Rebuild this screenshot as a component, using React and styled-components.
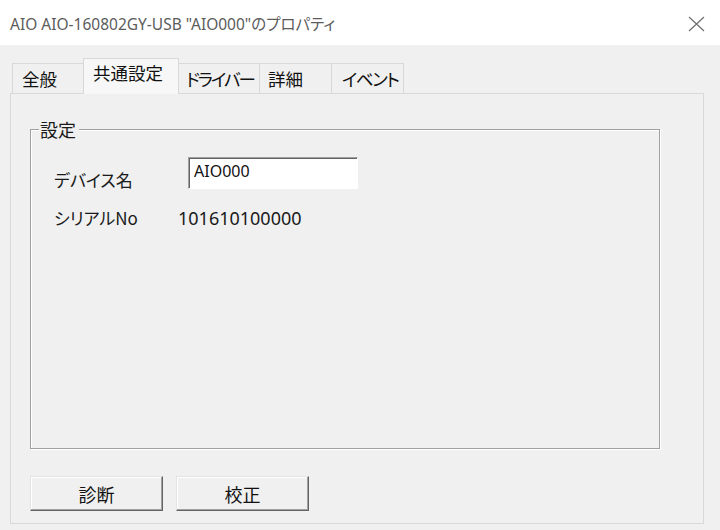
import styled, { createGlobalStyle } from "styled-components";

const GlobalStyle = createGlobalStyle`
  html, body {
    margin: 0;
    padding: 0;
    background: #ffffff;
  }
  body {
    font-family: "Noto Sans CJK JP", "Noto Sans", sans-serif;
    font-feature-settings: "palt";
    color: #1a1a1a;
  }
`;

const Window = styled.div`
  width: 720px;
  height: 530px;
  display: flex;
  flex-direction: column;
  overflow: hidden;
`;

const TitleBar = styled.div`
  height: 45px;
  flex: none;
  display: flex;
  align-items: center;
  justify-content: space-between;
  padding: 2px 15px 0 10px;
  box-sizing: border-box;
  background: #ffffff;
`;

const Title = styled.span`
  font-family: "Noto Sans", "Noto Sans CJK JP", sans-serif;
  font-size: 15.5px;
  color: #5c5c5c;
`;

const Body = styled.div`
  flex: 1;
  display: flex;
  flex-direction: column;
  padding: 13px 16px 6px 10px;
  background: #f0f0f0;
  min-height: 0;
`;

const TabStrip = styled.div`
  display: flex;
  align-items: flex-end;
  height: 35px;
  padding-left: 2px;
`;

const Tab = styled.div`
  width: ${({ w }) => w}px;
  height: ${({ active }) => (active ? 36 : 30)}px;
  margin-bottom: ${({ active }) => (active ? -1 : 0)}px;
  box-sizing: border-box;
  display: flex;
  align-items: center;
  padding-left: ${({ pl }) => pl}px;
  padding-bottom: ${({ active }) => (active ? 8 : 0)}px;
  border: 1px solid #d9d9d9;
  border-bottom: none;
  margin-left: ${({ first }) => (first ? 0 : -1)}px;
  background: ${({ active }) => (active ? "#f7f7f7" : "#f0f0f0")};
  position: relative;
  z-index: ${({ active }) => (active ? 1 : 0)};
  font-size: 17.5px;
  letter-spacing: ${({ ls }) => ls || 0}px;
  white-space: nowrap;
  color: #111;
`;

const Panel = styled.div`
  flex: 1;
  display: flex;
  flex-direction: column;
  border: 1px solid #d9d9d9;
  background: #f0f0f0;
  padding: 35px 43px 12px 19px;
`;

const GroupBox = styled.div`
  flex: 1;
  position: relative;
  border: 1px solid #a0a0a0;
  box-shadow: 1px 1px 0 #ffffff, inset 1px 1px 0 #ffffff;
  padding: 27px 24px 0 23px;
`;

const Legend = styled.span`
  position: absolute;
  top: -12px;
  left: 8px;
  padding: 0 3px 0 1px;
  background: #f0f0f0;
  font-size: 18px;
  line-height: 22px;
`;

const FieldRow = styled.div`
  display: flex;
  align-items: ${({ top }) => (top ? "flex-start" : "center")};
  margin-top: ${({ mt }) => mt || 0}px;
`;

const Label = styled.span`
  width: ${({ w }) => w}px;
  flex: none;
  font-size: 17px;
  line-height: 22px;
  padding-top: ${({ pt }) => pt || 0}px;
`;

const Value = styled.span`
  font-family: "Noto Sans", sans-serif;
  font-size: 18px;
  line-height: 22px;
`;

const TextBox = styled.div`
  width: 170px;
  height: 32px;
  box-sizing: border-box;
  background: #ffffff;
  border: 1px solid;
  border-color: #a0a0a0 #ffffff #ffffff #a0a0a0;
  box-shadow: inset 1px 1px 0 #646464;
  padding: 2px 5px;
  font-family: "Noto Sans", sans-serif;
  font-size: 16px;
  line-height: 22px;
  color: #111;
`;

const ButtonRow = styled.div`
  display: flex;
  gap: 13px;
  margin-top: 27px;
`;

const Button = styled.button`
  width: 133px;
  height: 35px;
  box-sizing: border-box;
  background: #f0f0f0;
  border: 1px solid;
  border-color: #e3e3e3 #646464 #646464 #e3e3e3;
  box-shadow: inset -1px -1px 0 #a0a0a0, inset 1px 1px 0 #ffffff;
  font-family: "Noto Sans CJK JP", sans-serif;
  font-size: 18px;
  color: #111;
  padding: 0;
`;

const CloseIcon = () => (
  <svg width="17" height="16" viewBox="0 0 17 16">
    <path d="M1 1 L16 15 M16 1 L1 15" stroke="#6e6e6e" strokeWidth="1.2" fill="none" />
  </svg>
);

const tabs = [
  { label: "全般", w: 72, pl: 9 },
  { label: "共通設定", w: 96, pl: 9, active: true },
  { label: "ドライバー", w: 82, pl: 7, ls: -2 },
  { label: "詳細", w: 73, pl: 8 },
  { label: "イベント", w: 73, pl: 10, ls: -1.5 },
];

export default function App() {
  return (
    <>
      <GlobalStyle />
      <Window>
        <TitleBar>
          <Title>AIO AIO-160802GY-USB "AIO000"のプロパティ</Title>
          <CloseIcon />
        </TitleBar>
        <Body>
          <TabStrip>
            {tabs.map((t, i) => (
              <Tab key={t.label} w={t.w} pl={t.pl} ls={t.ls} active={t.active} first={i === 0}>
                {t.label}
              </Tab>
            ))}
          </TabStrip>
          <Panel>
            <GroupBox>
              <Legend>設定</Legend>
              <FieldRow top>
                <Label w={134} pt={12}>デバイス名</Label>
                <TextBox>AIO000</TextBox>
              </FieldRow>
              <FieldRow mt={16}>
                <Label w={124}>シリアルNo</Label>
                <Value>101610100000</Value>
              </FieldRow>
            </GroupBox>
            <ButtonRow>
              <Button>診断</Button>
              <Button>校正</Button>
            </ButtonRow>
          </Panel>
        </Body>
      </Window>
    </>
  );
}
